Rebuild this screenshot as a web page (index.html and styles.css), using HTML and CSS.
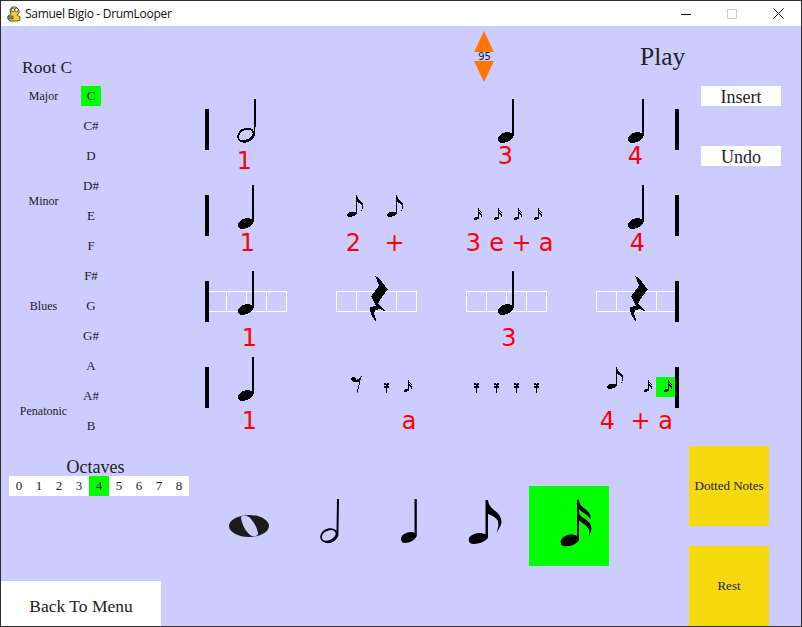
FILE: index.html
```html
<!DOCTYPE html>
<html>
<head>
    <title>Samuel Bigio - DrumLooper</title>
    <link rel="stylesheet" href="styles.css">
</head>
<body>
    <!-- Note sprites -->
    <svg class="sprites" xmlns="http://www.w3.org/2000/svg">
        <symbol id="whole" viewBox="0 0 40 22">
            <path fill="#1c1c1c" fill-rule="evenodd" d="M20 0C31 0 40 5 40 11S31 22 20 22 0 17 0 11 9 0 20 0ZM12 3C11 1 15 .5 18 1 23 3 28 12 29 18 29.500 21 26 21.500 23 21 18 19 13 10 12 3Z"/>
        </symbol>
        <symbol id="half" viewBox="0 0 19 45">
            <path d="M17 0H19L18.400 36C17 41 12 45 6 44 1 43 -1 39 1 35 3 30 10 28 14 30 15 30.500 16 31 16.500 32ZM5 33C2 35 1 39 3 41 6 43 12 41 15 37 17 33 14 31 11 31 9 31 7 32 5 33Z" fill-rule="evenodd"/>
        </symbol>
        <symbol id="quarter" viewBox="0 0 16 44">
            <path d="M13.500 0H15.800V37C14 41 9 44 4 44 1 44 0 42 0 40 0 36 5 33 10 33 11.500 33 12.800 33.500 13.500 34Z"/>
        </symbol>
        <symbol id="eighth" viewBox="0 0 34 44">
            <path d="M17 0H19.500C20 6 24 9 28 12 33 16 34 22 32 26L28 33C30 27 31 22 28 19 25 16 22 15 19.500 14V38C17 41 11 44 5 44 2 44 0 42 0 40 0 36 6 33 11 33 13 33 15.500 33.500 17 34.500Z"/>
        </symbol>
        <symbol id="sixteenth" viewBox="0 0 31 47">
            <path d="M16.500 0H18.500C19 5 21 7 24 9 28 12 31 15 30 20 27 15 22 13 18.500 10V13C19 16 21 17 24 19 27 21 32 25 31 31L28 37 29 31C27 26 22 24 18.500 21V41C16 44 11 47 5 47 2 47 0 45 0 43 0 39 5 35 10 35 13 35 15 35.500 16.500 36.500Z"/>
        </symbol>
        <symbol id="rest-quarter" viewBox="0 0 18 47">
            <path d="M5 0 10 4 17.700 14 11.700 21.700 8.300 28.300 16.700 37.300 8 32 6 31 1 21 6 14 9 10Z"/>
            <path d="M0 31.500 6 30.500 10 33 5 35 4 38 6.700 46.700 2 41 0 35Z"/>
        </symbol>
        <symbol id="rest-eighth" viewBox="0 0 11 17">
            <path d="M11 0 9.500 5 6.500 17 5.500 17 8 7C6 7 2.500 7 1 5.500 -0.500 4 0 1.500 2 1.200 4 1 5 2.500 5 4 7 4.500 9 3 11 0Z"/>
        </symbol>
        <symbol id="rest-sixteenth" viewBox="0 0 5 10">
            <path d="M0 0H2V1H3V0H5V2H4V3H5V5H3V10H2V5H0V3H2V2H0Z"/>
        </symbol>
    </svg>

    <div class="window">
        <!-- Title bar -->
        <div class="titlebar">
            <svg class="app-icon" viewBox="0 0 16 16">
                <path fill="#f3cf2f" stroke="#5a5330" d="M4 4 6 1H10L13 4V7L11 9 14 11V14L11 15H4L2 13V10L5 8Z"/>
                <circle cx="7" cy="4" r="1.800" fill="#fff" stroke="#333" stroke-width=".7"/>
                <circle cx="10.500" cy="4" r="1.800" fill="#fff" stroke="#333" stroke-width=".7"/>
                <rect x="2" y="10" width="5" height="3" fill="#888" stroke="#333" stroke-width=".6"/>
            </svg>
            <span class="title-text">Samuel Bigio - DrumLooper</span>
            <div class="window-controls">
                <div class="control"><svg width="10" height="10"><path d="M0 5.500H10" stroke="#111"/></svg></div>
                <div class="control"><svg width="10" height="10"><rect x=".5" y=".5" width="9" height="9" fill="none" stroke="#ccc"/></svg></div>
                <div class="control"><svg width="11" height="11"><path d="M.5 .5 10.500 10.500M10.500 .5 .5 10.500" stroke="#111"/></svg></div>
            </div>
        </div>

        <div class="app">
            <div class="main">
                <!-- Root and scales -->
                <div class="sidebar">
                    <div class="root-label">Root C</div>
                    <div class="scales">
                        <div class="scale-names">
                            <div>Major</div>
                            <div>Minor</div>
                            <div>Blues</div>
                            <div>Penatonic</div>
                        </div>
                        <div class="keys">
                            <div class="key"><span class="selected">C</span></div>
                            <div class="key"><span>C#</span></div>
                            <div class="key"><span>D</span></div>
                            <div class="key"><span>D#</span></div>
                            <div class="key"><span>E</span></div>
                            <div class="key"><span>F</span></div>
                            <div class="key"><span>F#</span></div>
                            <div class="key"><span>G</span></div>
                            <div class="key"><span>G#</span></div>
                            <div class="key"><span>A</span></div>
                            <div class="key"><span>A#</span></div>
                            <div class="key"><span>B</span></div>
                        </div>
                    </div>
                </div>

                <div class="center">
                    <div class="transport">
                        <div class="tempo">
                            <div class="arrow-up"></div>
                            <div class="tempo-value">95</div>
                            <div class="arrow-down"></div>
                        </div>
                        <div class="play">Play</div>
                    </div>

                    <!-- Staff -->
                    <div class="staff">
                        <div class="measure">
                            <div class="beats">
                                <div class="beat"><div class="slot s4"><svg class="n-half"><use href="#half"/></svg></div></div>
                                <div class="beat"></div>
                                <div class="beat"><div class="slot s4"><svg class="n-quarter"><use href="#quarter"/></svg></div></div>
                                <div class="beat"><div class="slot s4"><svg class="n-quarter"><use href="#quarter"/></svg></div></div>
                            </div>
                            <div class="counts counts-1"><span>1</span><span>3</span><span>4</span></div>
                        </div>

                        <div class="measure">
                            <div class="beats">
                                <div class="beat"><div class="slot s4"><svg class="n-quarter"><use href="#quarter"/></svg></div></div>
                                <div class="beat">
                                    <div class="slot s2"><svg class="n-eighth"><use href="#eighth"/></svg></div>
                                    <div class="slot s2"><svg class="n-eighth"><use href="#eighth"/></svg></div>
                                </div>
                                <div class="beat">
                                    <div class="slot"><svg class="n-sixteenth"><use href="#sixteenth"/></svg></div>
                                    <div class="slot"><svg class="n-sixteenth"><use href="#sixteenth"/></svg></div>
                                    <div class="slot"><svg class="n-sixteenth"><use href="#sixteenth"/></svg></div>
                                    <div class="slot"><svg class="n-sixteenth"><use href="#sixteenth"/></svg></div>
                                </div>
                                <div class="beat"><div class="slot s4"><svg class="n-quarter"><use href="#quarter"/></svg></div></div>
                            </div>
                            <div class="counts counts-2"><span>1</span><span>2</span><span>+</span><span>3</span><span>e</span><span>+</span><span>a</span><span>4</span></div>
                        </div>

                        <!-- Row under the mouse shows its grid -->
                        <div class="measure">
                            <div class="beats">
                                <div class="beat">
                                    <div class="cell"></div><div class="cell"></div><div class="cell"></div><div class="cell"></div>
                                    <div class="slot over"><svg class="n-quarter"><use href="#quarter"/></svg></div>
                                </div>
                                <div class="beat">
                                    <div class="cell"></div><div class="cell"></div><div class="cell"></div><div class="cell"></div>
                                    <div class="slot over"><svg class="r-quarter"><use href="#rest-quarter"/></svg></div>
                                </div>
                                <div class="beat">
                                    <div class="cell"></div><div class="cell"></div><div class="cell"></div><div class="cell"></div>
                                    <div class="slot over"><svg class="n-quarter"><use href="#quarter"/></svg></div>
                                </div>
                                <div class="beat">
                                    <div class="cell"></div><div class="cell"></div><div class="cell"></div><div class="cell"></div>
                                    <div class="slot over"><svg class="r-quarter"><use href="#rest-quarter"/></svg></div>
                                </div>
                            </div>
                            <div class="counts counts-3"><span>1</span><span>3</span></div>
                        </div>

                        <div class="measure">
                            <div class="beats">
                                <div class="beat"><div class="slot s4"><svg class="n-quarter"><use href="#quarter"/></svg></div></div>
                                <div class="beat">
                                    <div class="slot s2"><svg class="r-eighth"><use href="#rest-eighth"/></svg></div>
                                    <div class="slot"><svg class="r-sixteenth"><use href="#rest-sixteenth"/></svg></div>
                                    <div class="slot"><svg class="n-sixteenth"><use href="#sixteenth"/></svg></div>
                                </div>
                                <div class="beat">
                                    <div class="slot"><svg class="r-sixteenth"><use href="#rest-sixteenth"/></svg></div>
                                    <div class="slot"><svg class="r-sixteenth"><use href="#rest-sixteenth"/></svg></div>
                                    <div class="slot"><svg class="r-sixteenth"><use href="#rest-sixteenth"/></svg></div>
                                    <div class="slot"><svg class="r-sixteenth"><use href="#rest-sixteenth"/></svg></div>
                                </div>
                                <div class="beat">
                                    <div class="slot s2"><svg class="n-eighth"><use href="#eighth"/></svg></div>
                                    <div class="slot"><svg class="n-sixteenth"><use href="#sixteenth"/></svg></div>
                                    <div class="slot selected"><svg class="n-sixteenth"><use href="#sixteenth"/></svg></div>
                                </div>
                            </div>
                            <div class="counts counts-4"><span>1</span><span>a</span><span>4</span><span>+</span><span>a</span></div>
                        </div>
                    </div>
                </div>

                <div class="edit-buttons">
                    <div class="edit-button">Insert</div>
                    <div class="edit-button">Undo</div>
                </div>
            </div>

            <!-- Bottom controls -->
            <div class="bottom">
                <div class="bottom-left">
                    <div class="octave-label">Octaves</div>
                    <div class="octaves">
                        <span>0</span><span>1</span><span>2</span><span>3</span><span class="selected">4</span><span>5</span><span>6</span><span>7</span><span>8</span>
                    </div>
                    <div class="back-button">Back To Menu</div>
                </div>

                <div class="palette">
                    <div class="palette-item"><svg class="p-whole"><use href="#whole"/></svg></div>
                    <div class="palette-item"><svg class="p-half"><use href="#half"/></svg></div>
                    <div class="palette-item"><svg class="p-quarter"><use href="#quarter"/></svg></div>
                    <div class="palette-item"><svg class="p-eighth"><use href="#eighth"/></svg></div>
                    <div class="palette-item selected"><svg class="p-sixteenth"><use href="#sixteenth"/></svg></div>
                </div>

                <div class="modifiers">
                    <div class="modifier">Dotted Notes</div>
                    <div class="modifier">Rest</div>
                </div>
            </div>
        </div>
    </div>
</body>
</html>
```

FILE: styles.css
```css
body {
    margin: 0;
    font-family: "Liberation Serif", serif;
    color: #222;
}

.sprites {
    display: none;
}

.window {
    width: 802px;
    height: 627px;
    box-sizing: border-box;
    border: 1px solid #2e2e2e;
    display: flex;
    flex-direction: column;
    overflow: hidden;
}

/* Title bar */
.titlebar {
    height: 25px;
    background: white;
    display: flex;
    align-items: center;
    flex-shrink: 0;
}

.app-icon {
    width: 16px;
    height: 16px;
    margin-left: 5px;
}

.title-text {
    margin-left: 3px;
    font-family: "Open Sans", sans-serif;
    font-size: 12px;
    letter-spacing: -0.3px;
    color: #111;
}

.window-controls {
    margin-left: auto;
    display: flex;
}

.control {
    width: 46px;
    height: 25px;
    display: flex;
    justify-content: center;
    align-items: center;
}

/* App */
.app {
    flex: 1;
    background: #ccccff;
    display: flex;
    flex-direction: column;
}

.main {
    height: 420px;
    display: flex;
}

.selected {
    background: #00ff00;
}

/* Sidebar */
.sidebar {
    width: 189px;
    flex-shrink: 0;
}

.root-label {
    height: 55px;
    box-sizing: border-box;
    padding: 30px 0 0 21px;
    font-size: 17.5px;
    line-height: 22px;
}

.scales {
    display: flex;
}

.scale-names {
    width: 75px;
    padding: 5px 0 0 5px;
    display: flex;
    flex-direction: column;
    gap: 85px;
    text-align: center;
    font-size: 12px;
    line-height: 20px;
}

.keys {
    width: 20px;
}

.key {
    height: 30px;
    display: flex;
    align-items: center;
    justify-content: center;
    font-size: 13px;
}

.key span {
    width: 20px;
    height: 20px;
    line-height: 20px;
    text-align: center;
    flex-shrink: 0;
}

/* Tempo and play */
.center {
    width: 510px;
    flex-shrink: 0;
}

.transport {
    height: 60px;
    display: flex;
}

.tempo {
    width: 21px;
    margin: 5px 0 0 284px;
    display: flex;
    flex-direction: column;
}

.arrow-up,
.arrow-down {
    width: 0;
    height: 0;
    border-left: 10.5px solid transparent;
    border-right: 10.5px solid transparent;
}

.arrow-up {
    border-bottom: 21px solid #ff7700;
}

.arrow-down {
    border-top: 21px solid #ff7700;
}

.tempo-value {
    height: 9px;
    line-height: 9px;
    text-align: center;
    font-family: "DejaVu Sans", sans-serif;
    font-size: 10px;
    color: #1a1a4a;
}

.play {
    margin: 15px 0 0 145px;
    font-size: 25.5px;
    line-height: 32px;
}

/* Staff */
.measure {
    position: relative;
    height: 86px;
}

.measure::before,
.measure::after {
    content: "";
    position: absolute;
    top: 23px;
    width: 4px;
    height: 41px;
    background: black;
}

.measure::before {
    left: 15px;
}

.measure::after {
    left: 485px;
}

.beats {
    padding: 33px 0 0 16px;
    display: flex;
    gap: 50px;
}

.beat {
    width: 80px;
    height: 20px;
    display: grid;
    grid-template-columns: repeat(4, 20px);
    grid-template-rows: 20px;
}

.slot {
    grid-row: 1;
    display: flex;
    justify-content: center;
    align-items: center;
}

.s2 {
    grid-column: span 2;
}

.s4 {
    grid-column: span 4;
}

.over {
    grid-column: 1 / -1;
}

.cell {
    grid-row: 1;
    width: 21px;
    height: 21px;
    box-sizing: border-box;
    border: 1px solid white;
}

.cell:nth-child(1) {
    grid-column: 1;
}

.cell:nth-child(2) {
    grid-column: 2;
}

.cell:nth-child(3) {
    grid-column: 3;
}

.cell:nth-child(4) {
    grid-column: 4;
}

.slot svg {
    flex-shrink: 0;
    shape-rendering: crispEdges;
}

.n-half {
    width: 19px;
    height: 45px;
    transform: translateY(-8.5px);
}

.n-quarter {
    width: 16px;
    height: 44px;
    transform: translateY(-8px);
}

.n-eighth {
    width: 17px;
    height: 22px;
    transform: translate(-1px, -9px);
}

.n-sixteenth {
    width: 8px;
    height: 12px;
    transform: translate(2px, -1px);
}

.r-quarter {
    width: 18px;
    height: 47px;
    transform: translate(3px, -2.5px);
}

.r-eighth {
    width: 11px;
    height: 17px;
    transform: translateY(-3.5px);
}

.r-sixteenth {
    width: 5px;
    height: 10px;
    transform: translateY(1px);
}

/* Beat counts: columns hold the distance between label centres */
.counts {
    display: grid;
    grid-auto-flow: column;
    justify-content: start;
    font-family: "DejaVu Sans", sans-serif;
    font-size: 24px;
    line-height: 28px;
    color: #ff0000;
}

.counts span {
    width: 0;
    display: flex;
    justify-content: center;
}

.counts-1 {
    padding-left: 54.5px;
    margin-top: 3px;
    grid-template-columns: 261px 130px 20px;
}

/* the first count of the top row sits lower than the others */
.counts-1 span:first-child {
    margin-top: 5px;
}

.counts-2 {
    padding-left: 57.5px;
    margin-top: 4px;
    grid-template-columns: 106px 41px 79px 23px 25px 24.5px 91.5px 20px;
}

.counts-3 {
    padding-left: 59.5px;
    margin-top: 13px;
    grid-template-columns: 259.5px 20px;
}

.counts-4 {
    padding-left: 59.5px;
    margin-top: 10px;
    grid-template-columns: 159.5px 198.5px 33px 25px 20px;
}

/* Insert and undo */
.edit-buttons {
    padding: 60px 0 0 1px;
    display: flex;
    flex-direction: column;
    gap: 40px;
}

.edit-button {
    width: 80px;
    height: 20px;
    background: white;
    text-align: center;
    font-size: 18px;
    line-height: 22px;
}

/* Bottom controls */
.bottom {
    height: 180px;
    display: flex;
}

.bottom-left {
    width: 189px;
    flex-shrink: 0;
    display: flex;
    flex-direction: column;
}

.octave-label {
    margin-top: 12px;
    text-align: center;
    font-size: 18px;
    line-height: 18px;
}

.octaves {
    width: 180px;
    margin-left: 8px;
    display: flex;
    background: white;
    font-size: 13px;
}

.octaves span {
    width: 20px;
    height: 20px;
    line-height: 20px;
    text-align: center;
}

.back-button {
    width: 160px;
    height: 45px;
    margin-top: auto;
    padding-top: 5px;
    box-sizing: border-box;
    background: white;
    text-align: center;
    font-size: 17.5px;
    line-height: 40px;
}

.palette {
    height: 80px;
    margin: 40px 0 0 19px;
    display: flex;
}

.palette-item {
    width: 80px;
    height: 80px;
    display: flex;
    justify-content: center;
    align-items: center;
}

.p-whole {
    width: 40px;
    height: 22px;
}

.p-half {
    width: 19px;
    height: 45px;
    transform: translateY(-5px);
}

.p-quarter {
    width: 16px;
    height: 44px;
    transform: translateY(-5px);
}

.p-eighth {
    width: 34px;
    height: 44px;
    transform: translate(-3.5px, -4px);
}

.p-sixteenth {
    width: 31px;
    height: 47px;
    transform: translate(6.5px, -3.5px);
}

.modifiers {
    margin-left: 80px;
    display: flex;
    flex-direction: column;
    gap: 20px;
}

.modifier {
    width: 80px;
    height: 80px;
    display: flex;
    justify-content: center;
    align-items: center;
    background: #f6d90f;
    font-size: 13px;
}
```
